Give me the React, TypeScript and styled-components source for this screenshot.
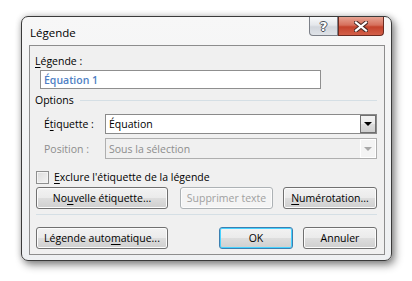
import React from "react";
import styled, { createGlobalStyle } from "styled-components";

const GlobalStyle = createGlobalStyle`
  body {
    margin: 0;
    background: #ffffff;
    font-family: "Open Sans", "Liberation Sans", sans-serif;
    font-size: 10.5px;
    color: #000000;
  }
`;

const Page = styled.div`
  width: 412px;
  height: 281px;
  padding: 16px 0 0 21px;
  box-sizing: border-box;
`;

const Window = styled.div`
  width: 371px;
  height: 245px;
  box-sizing: border-box;
  border: 1px solid #3a3a3a;
  border-radius: 7px;
  background: linear-gradient(180deg, #f7f7f7 0%, #eef0f2 100%);
  box-shadow: 3px 4px 9px rgba(0, 0, 0, 0.45), 0 0 6px rgba(0, 0, 0, 0.2);
  display: flex;
  flex-direction: column;
  padding: 0 6px 5px 7px;
`;

const TitleBar = styled.div`
  height: 28px;
  display: flex;
  align-items: flex-start;
  justify-content: space-between;
`;

const Title = styled.span`
  font-size: 11.5px;
  margin-top: 8px;
  margin-left: 1px;
`;

const Caption = styled.div`
  display: flex;
  margin-right: 1px;
`;

const CaptionButton = styled.div<{ $close?: boolean }>`
  width: ${(p) => (p.$close ? 46 : 29)}px;
  height: 19px;
  box-sizing: border-box;
  border: 1px solid ${(p) => (p.$close ? "#6b2a20" : "#7c8088")};
  border-top: none;
  border-radius: ${(p) => (p.$close ? "0 0 4px 0" : "0 0 0 4px")};
  background: ${(p) =>
    p.$close
      ? "linear-gradient(180deg, #e7a392 0%, #d6705c 45%, #c4432c 55%, #d3604a 100%)"
      : "linear-gradient(180deg, #f8f9fa 0%, #e4e7eb 45%, #d2d6dc 55%, #dfe3e8 100%)"};
  display: flex;
  align-items: center;
  justify-content: center;
  font-family: "DejaVu Sans", sans-serif;
  font-weight: bold;
  font-size: 13px;
  color: #ffffff;
  text-shadow: 1px 0 0 #4a4f58, -1px 0 0 #4a4f58, 0 1px 0 #4a4f58, 0 -1px 0 #4a4f58;
`;

const Client = styled.div`
  flex: 1;
  border: 1px solid #8d8d8d;
  background: #f0f0f0;
  padding: 8px 7px 0 5px;
  display: flex;
  flex-direction: column;
`;

const Label = styled.span<{ $disabled?: boolean }>`
  color: ${(p) => (p.$disabled ? "#8d8d8d" : "#000000")};
  white-space: nowrap;
  line-height: 14px;
`;

const Key = styled.u`
  text-decoration: underline;
  text-underline-offset: 2px;
`;

const TextBox = styled.div`
  margin: 2px 0 0 5px;
  width: 281px;
  height: 19px;
  box-sizing: border-box;
  border: 1px solid #8f8f8f;
  background: #ffffff;
  padding: 0 3px;
  display: flex;
  align-items: center;
  color: #4f7fc4;
  font-weight: 600;
`;

const GroupHeader = styled.div`
  margin-top: 4px;
  display: flex;
  align-items: center;
  gap: 6px;
  height: 14px;
`;

const Rule = styled.div`
  flex: 1;
  height: 1px;
  background: #d5dfe5;
`;

const FieldRow = styled.div<{ $gap: number }>`
  margin-top: ${(p) => p.$gap}px;
  display: flex;
  align-items: center;
  padding-left: 9px;
`;

const FieldLabel = styled(Label)`
  width: 61px;
`;

const Combo = styled.div<{ $disabled?: boolean }>`
  width: 272px;
  height: ${(p) => (p.$disabled ? 21 : 20)}px;
  box-sizing: border-box;
  border: 1px solid ${(p) => (p.$disabled ? "#afafaf" : "#8a8a8a")};
  background: ${(p) => (p.$disabled ? "#f0f0f0" : "#ffffff")};
  display: flex;
  align-items: stretch;
  color: ${(p) => (p.$disabled ? "#8d8d8d" : "#000000")};
`;

const ComboText = styled.span`
  flex: 1;
  padding-left: 3px;
  display: flex;
  align-items: center;
`;

const ComboButton = styled.div<{ $disabled?: boolean }>`
  width: 16px;
  box-sizing: border-box;
  border: 1px solid ${(p) => (p.$disabled ? "#ffffff" : "#707070")};
  background: ${(p) =>
    p.$disabled
      ? "#f4f4f4"
      : "linear-gradient(180deg, #f3f3f3 0%, #ebebeb 48%, #dddddd 52%, #cfcfcf 100%)"};
  display: flex;
  align-items: center;
  justify-content: center;
`;

const Arrow = styled.div<{ $disabled?: boolean }>`
  width: 0;
  height: 0;
  border-left: 4px solid transparent;
  border-right: 4px solid transparent;
  border-top: 4px solid ${(p) => (p.$disabled ? "#a8a8a8" : "#000000")};
`;

const CheckRow = styled.label`
  margin-top: 11px;
  display: flex;
  align-items: center;
  gap: 5px;
  padding-left: 1px;
`;

const CheckBox = styled.span`
  width: 13px;
  height: 13px;
  box-sizing: border-box;
  border: 1px solid #8e8f8f;
  background: linear-gradient(135deg, #dcdcdc 0%, #f4f4f4 100%);
  box-shadow: inset 0 0 0 1px #f4f4f4;
`;

const ButtonRow = styled.div<{ $top: number }>`
  margin-top: ${(p) => p.$top}px;
  display: flex;
  align-items: center;
  padding-left: 1px;
`;

const Button = styled.div<{
  $w: number;
  $disabled?: boolean;
  $default?: boolean;
  $ml?: number;
}>`
  width: ${(p) => p.$w}px;
  height: 22px;
  margin-left: ${(p) => p.$ml ?? 0}px;
  box-sizing: border-box;
  border-radius: 3px;
  border: 1px solid
    ${(p) => (p.$disabled ? "#adb2b5" : p.$default ? "#3c7fb1" : "#707070")};
  background: ${(p) =>
    p.$disabled
      ? "#f4f4f4"
      : "linear-gradient(180deg, #f2f2f2 0%, #ebebeb 48%, #dddddd 52%, #cfcfcf 100%)"};
  box-shadow: ${(p) =>
    p.$default ? "inset 0 0 0 1px #48d2ff" : "inset 0 0 0 1px #fcfcfc"};
  color: ${(p) => (p.$disabled ? "#a0a0a0" : "#000000")};
  display: flex;
  align-items: center;
  justify-content: center;
  white-space: nowrap;
`;

const Separator = styled.div`
  margin: 5px 0 0 1px;
  width: 341px;
  height: 1px;
  background: #d5dfe5;
`;

export default function App() {
  return (
    <Page>
      <GlobalStyle />
      <Window>
        <TitleBar>
          <Title>Légende</Title>
          <Caption>
            <CaptionButton>?</CaptionButton>
            <CaptionButton $close>
              <svg width="14" height="11" viewBox="0 0 14 11">
                <path
                  d="M2 1.5 L12 9.5 M12 1.5 L2 9.5"
                  stroke="#4a2a26"
                  strokeWidth="4.2"
                  strokeLinecap="square"
                />
                <path
                  d="M2 1.5 L12 9.5 M12 1.5 L2 9.5"
                  stroke="#ffffff"
                  strokeWidth="2.2"
                  strokeLinecap="square"
                />
              </svg>
            </CaptionButton>
          </Caption>
        </TitleBar>
        <Client>
          <Label>
            <Key>L</Key>égende :
          </Label>
          <TextBox>Équation 1</TextBox>
          <GroupHeader>
            <Label>Options</Label>
            <Rule />
          </GroupHeader>
          <FieldRow $gap={7}>
            <FieldLabel>
              É<Key>t</Key>iquette :
            </FieldLabel>
            <Combo>
              <ComboText>Équation</ComboText>
              <ComboButton>
                <Arrow />
              </ComboButton>
            </Combo>
          </FieldRow>
          <FieldRow $gap={4}>
            <FieldLabel $disabled>Position :</FieldLabel>
            <Combo $disabled>
              <ComboText>Sous la sélection</ComboText>
              <ComboButton $disabled>
                <Arrow $disabled />
              </ComboButton>
            </Combo>
          </FieldRow>
          <CheckRow>
            <CheckBox />
            <Label>
              <Key>E</Key>xclure l'étiquette de la légende
            </Label>
          </CheckRow>
          <ButtonRow $top={3}>
            <Button $w={132}>
              No<Key>u</Key>velle étiquette...
            </Button>
            <Button $w={93} $ml={12} $disabled>
              Supprimer texte
            </Button>
            <Button $w={94} $ml={10}>
              <Key>N</Key>umérotation...
            </Button>
          </ButtonRow>
          <Separator />
          <ButtonRow $top={12}>
            <Button $w={132}>
              Légende auto<Key>m</Key>atique...
            </Button>
            <Button $w={74} $ml={51} $default>
              OK
            </Button>
            <Button $w={74} $ml={10}>
              Annuler
            </Button>
          </ButtonRow>
        </Client>
      </Window>
    </Page>
  );
}
